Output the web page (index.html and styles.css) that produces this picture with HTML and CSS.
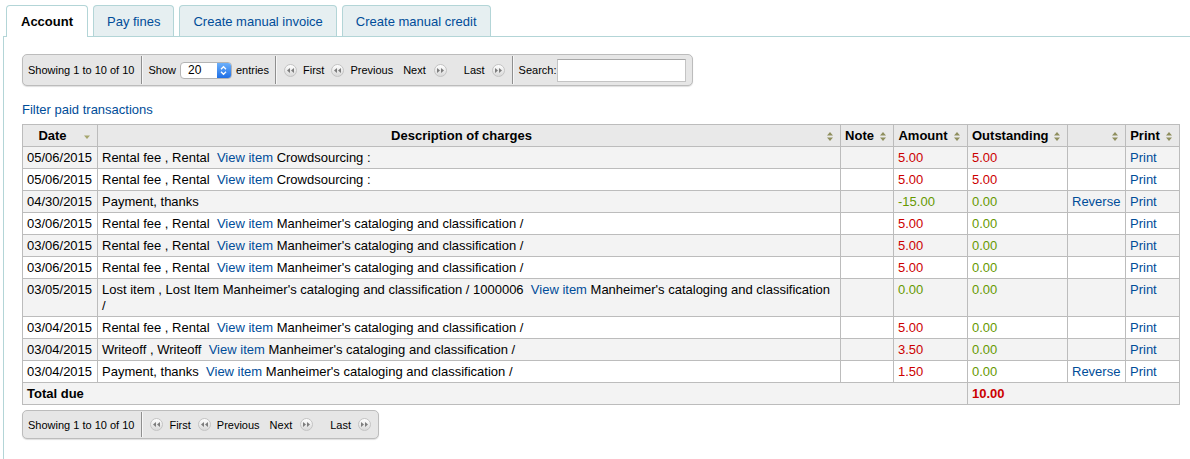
FILE: index.html
```html
<!DOCTYPE html>
<html lang="en">
<head>
<meta charset="utf-8">
<title>Account</title>
<link rel="stylesheet" href="styles.css">
</head>
<body>
<div class="page">
  <ul class="tabs">
    <li class="tab active">Account</li>
    <li class="tab"><a href="#">Pay fines</a></li>
    <li class="tab"><a href="#">Create manual invoice</a></li>
    <li class="tab"><a href="#">Create manual credit</a></li>
  </ul>
  <div class="panel">
    <div class="pager-row">
      <div class="pager top">
        <div class="sec info">Showing 1 to 10 of 10</div>
        <div class="sec length">
          <span>Show</span>
          <span class="select"><span class="val">20</span><span class="stepper"><svg width="7" height="11" viewBox="0 0 7 11"><path d="M1 4.2 L3.5 1.7 L6 4.2 M1 6.8 L3.5 9.3 L6 6.8" fill="none" stroke="#fff" stroke-width="1.3"/></svg></span></span>
          <span>entries</span>
        </div>
        <div class="sec paging">
          <span class="pbtn b-first"><span class="pico"><svg width="7" height="5" viewBox="0 0 7 5"><path d="M3 0 L0 2.5 L3 5Z M7 0 L4 2.5 L7 5Z" fill="#7d7d7d"/></svg></span>First</span>
          <span class="pbtn b-prev"><span class="pico"><svg width="7" height="5" viewBox="0 0 7 5"><path d="M3 0 L0 2.5 L3 5Z M7 0 L4 2.5 L7 5Z" fill="#7d7d7d"/></svg></span>Previous</span>
          <span class="pbtn b-next">Next<span class="pico"><svg width="7" height="5" viewBox="0 0 7 5"><path d="M0 0 L3 2.5 L0 5Z M4 0 L7 2.5 L4 5Z" fill="#7d7d7d"/></svg></span></span>
          <span class="pbtn b-last">Last<span class="pico"><svg width="7" height="5" viewBox="0 0 7 5"><path d="M0 0 L3 2.5 L0 5Z M4 0 L7 2.5 L4 5Z" fill="#7d7d7d"/></svg></span></span>
        </div>
        <div class="sec search">
          <label for="q">Search:</label><input id="q" type="text">
        </div>
      </div>
    </div>

    <p class="filter"><a href="#">Filter paid transactions</a></p>

    <table class="acct">
      <colgroup>
        <col class="c-date"><col class="c-desc"><col class="c-note"><col class="c-amt"><col class="c-out"><col class="c-act"><col class="c-print">
      </colgroup>
      <thead>
        <tr>
          <th>Date<svg class="sort" width="6" height="9" viewBox="0 0 6 9"><path d="M0 3.5 L6 3.5 L3 7Z" fill="#a6a66e"/></svg></th>
          <th>Description of charges<svg class="sort" width="6" height="9" viewBox="0 0 6 9"><path d="M3 0 L6 3.6 L0 3.6Z M0 5.4 L6 5.4 L3 9Z" fill="#8f8f5e"/></svg></th>
          <th>Note<svg class="sort" width="6" height="9" viewBox="0 0 6 9"><path d="M3 0 L6 3.6 L0 3.6Z M0 5.4 L6 5.4 L3 9Z" fill="#8f8f5e"/></svg></th>
          <th>Amount<svg class="sort" width="6" height="9" viewBox="0 0 6 9"><path d="M3 0 L6 3.6 L0 3.6Z M0 5.4 L6 5.4 L3 9Z" fill="#8f8f5e"/></svg></th>
          <th>Outstanding<svg class="sort" width="6" height="9" viewBox="0 0 6 9"><path d="M3 0 L6 3.6 L0 3.6Z M0 5.4 L6 5.4 L3 9Z" fill="#8f8f5e"/></svg></th>
          <th><svg class="sort" width="6" height="9" viewBox="0 0 6 9"><path d="M3 0 L6 3.6 L0 3.6Z M0 5.4 L6 5.4 L3 9Z" fill="#8f8f5e"/></svg></th>
          <th>Print<svg class="sort" width="6" height="9" viewBox="0 0 6 9"><path d="M3 0 L6 3.6 L0 3.6Z M0 5.4 L6 5.4 L3 9Z" fill="#8f8f5e"/></svg></th>
        </tr>
      </thead>
      <tbody>
        <tr>
          <td>05/06/2015</td>
          <td>Rental fee , Rental &nbsp;<a href="#">View item</a> Crowdsourcing :</td>
          <td></td><td class="debit">5.00</td><td class="debit">5.00</td><td></td><td><a href="#">Print</a></td>
        </tr>
        <tr>
          <td>05/06/2015</td>
          <td>Rental fee , Rental &nbsp;<a href="#">View item</a> Crowdsourcing :</td>
          <td></td><td class="debit">5.00</td><td class="debit">5.00</td><td></td><td><a href="#">Print</a></td>
        </tr>
        <tr>
          <td>04/30/2015</td>
          <td>Payment, thanks</td>
          <td></td><td class="credit">-15.00</td><td class="credit">0.00</td><td><a href="#">Reverse</a></td><td><a href="#">Print</a></td>
        </tr>
        <tr>
          <td>03/06/2015</td>
          <td>Rental fee , Rental &nbsp;<a href="#">View item</a> Manheimer's cataloging and classification /</td>
          <td></td><td class="debit">5.00</td><td class="credit">0.00</td><td></td><td><a href="#">Print</a></td>
        </tr>
        <tr>
          <td>03/06/2015</td>
          <td>Rental fee , Rental &nbsp;<a href="#">View item</a> Manheimer's cataloging and classification /</td>
          <td></td><td class="debit">5.00</td><td class="credit">0.00</td><td></td><td><a href="#">Print</a></td>
        </tr>
        <tr>
          <td>03/06/2015</td>
          <td>Rental fee , Rental &nbsp;<a href="#">View item</a> Manheimer's cataloging and classification /</td>
          <td></td><td class="debit">5.00</td><td class="credit">0.00</td><td></td><td><a href="#">Print</a></td>
        </tr>
        <tr>
          <td>03/05/2015</td>
          <td>Lost item , Lost Item Manheimer's cataloging and classification / 1000006 &nbsp;<a href="#">View item</a> Manheimer's cataloging and classification /</td>
          <td></td><td class="credit">0.00</td><td class="credit">0.00</td><td></td><td><a href="#">Print</a></td>
        </tr>
        <tr>
          <td>03/04/2015</td>
          <td>Rental fee , Rental &nbsp;<a href="#">View item</a> Manheimer's cataloging and classification /</td>
          <td></td><td class="debit">5.00</td><td class="credit">0.00</td><td></td><td><a href="#">Print</a></td>
        </tr>
        <tr>
          <td>03/04/2015</td>
          <td>Writeoff , Writeoff &nbsp;<a href="#">View item</a> Manheimer's cataloging and classification /</td>
          <td></td><td class="debit">3.50</td><td class="credit">0.00</td><td></td><td><a href="#">Print</a></td>
        </tr>
        <tr>
          <td>03/04/2015</td>
          <td>Payment, thanks &nbsp;<a href="#">View item</a> Manheimer's cataloging and classification /</td>
          <td></td><td class="debit">1.50</td><td class="credit">0.00</td><td><a href="#">Reverse</a></td><td><a href="#">Print</a></td>
        </tr>
      </tbody>
      <tfoot>
        <tr class="total">
          <td colspan="4">Total due</td>
          <td class="debit" colspan="3">10.00</td>
        </tr>
      </tfoot>
    </table>

    <div class="pager-row">
      <div class="pager bottom">
        <div class="sec info">Showing 1 to 10 of 10</div>
        <div class="sec paging">
          <span class="pbtn b-first"><span class="pico"><svg width="7" height="5" viewBox="0 0 7 5"><path d="M3 0 L0 2.5 L3 5Z M7 0 L4 2.5 L7 5Z" fill="#7d7d7d"/></svg></span>First</span>
          <span class="pbtn b-prev"><span class="pico"><svg width="7" height="5" viewBox="0 0 7 5"><path d="M3 0 L0 2.5 L3 5Z M7 0 L4 2.5 L7 5Z" fill="#7d7d7d"/></svg></span>Previous</span>
          <span class="pbtn b-next">Next<span class="pico"><svg width="7" height="5" viewBox="0 0 7 5"><path d="M0 0 L3 2.5 L0 5Z M4 0 L7 2.5 L4 5Z" fill="#7d7d7d"/></svg></span></span>
          <span class="pbtn b-last">Last<span class="pico"><svg width="7" height="5" viewBox="0 0 7 5"><path d="M0 0 L3 2.5 L0 5Z M4 0 L7 2.5 L4 5Z" fill="#7d7d7d"/></svg></span></span>
        </div>
      </div>
    </div>
  </div>
</div>
</body>
</html>
```

FILE: styles.css
```css
html, body {
  margin: 0;
  padding: 0;
}
body {
  font-family: "Liberation Sans", Arial, Helvetica, sans-serif;
  font-size: 13px;
  color: #000;
  background: #fff;
  overflow: hidden;
}
a {
  color: #004d99;
  text-decoration: none;
}

.page {
  margin-left: 3px;
}

/* tabs */
.tabs {
  display: flex;
  align-items: flex-start;
  gap: 5px;
  list-style: none;
  margin: 0;
  padding: 5px 0 0 3px;
  height: 37px;
  box-sizing: border-box;
  border-bottom: 1px solid #b3d5d7;
}
.tab {
  height: 31px;
  box-sizing: border-box;
  padding: 0 13px;
  line-height: 32px;
  border: 1px solid #b3d5d7;
  border-bottom: none;
  border-radius: 4px 4px 0 0;
  background: #e6eff1;
}
.tab.active {
  height: 32px;
  margin-bottom: -1px;
  padding: 0 14px;
  background: #fff;
  font-weight: bold;
  color: #000;
}

.panel {
  border-left: 1px solid #b3d5d7;
  padding: 17px 0 0 18px;
  min-height: calc(100vh - 37px);
  box-sizing: border-box;
}

/* pager */
.pager {
  display: inline-flex;
  align-items: stretch;
  box-sizing: border-box;
  border: 1px solid #bcbcbc;
  border-radius: 5px;
  background: #e6e6e6;
  font-size: 11px;
  box-shadow: 0 1px 1px rgba(0, 0, 0, 0.13);
}
.pager.top { height: 32px; }
.pager.bottom { height: 29px; margin-top: 5px; }

.sec {
  display: flex;
  align-items: center;
  margin: 1px 0;
  border-right: 1px solid #8f8f8f;
  box-shadow: 1px 0 0 #f7f7f7;
}
.sec:last-child {
  border-right: none;
  box-shadow: none;
}
.info { padding: 0 7px 0 5px; }
.length { padding: 0 6px 0 6px; gap: 4px; }
.paging { padding: 0 7px 0 8px; }
.search { padding: 0 6px 0 6px; }

.select {
  display: flex;
  align-items: stretch;
  width: 52px;
  height: 17px;
  box-sizing: border-box;
  border: 1px solid #b4b4b4;
  border-radius: 4px;
  background: #fff;
  overflow: hidden;
}
.select .val {
  flex: 1;
  padding-left: 7px;
  font-size: 12px;
  line-height: 15px;
}
.select .stepper {
  width: 14px;
  display: flex;
  align-items: center;
  justify-content: center;
  background: linear-gradient(#6cb0fb, #1f6fe6);
}

.pbtn {
  display: flex;
  align-items: center;
  gap: 6px;
}
.b-prev { margin-left: 7px; }
.b-next { margin-left: 10px; gap: 8px; }
.b-last { margin-left: 17px; gap: 7px; }

.pico {
  width: 13px;
  height: 13px;
  box-sizing: border-box;
  border-radius: 50%;
  border: 1px solid #c4c4c4;
  background: linear-gradient(#fefefe, #d9d9d9);
  display: inline-flex;
  align-items: center;
  justify-content: center;
}

.search input {
  width: 129px;
  height: 23px;
  box-sizing: border-box;
  margin: 0;
  border: 1px solid #c4c4c4;
  border-top-color: #a8a8a8;
  background: #fff;
  font: 12px "Liberation Sans", Arial, sans-serif;
  padding: 2px 4px;
}

.filter {
  margin: 16px 0 6px;
  line-height: 16px;
}

/* table */
.acct {
  border-collapse: collapse;
  table-layout: fixed;
  width: 1157px;
}
.c-date { width: 75px; }
.c-desc { width: 743px; }
.c-note { width: 53px; }
.c-amt { width: 74px; }
.c-out { width: 100px; }
.c-act { width: 58px; }
.c-print { width: 54px; }

.acct th,
.acct td {
  border: 1px solid #bcbcbc;
  padding: 3px 4px 2px;
  line-height: 16px;
  vertical-align: top;
  text-align: left;
}
.acct th {
  position: relative;
  background: #e9e9e9;
  font-weight: bold;
  text-align: center;
  vertical-align: middle;
  padding-right: 19px;
  white-space: nowrap;
}
.acct th .sort {
  position: absolute;
  right: 7px;
  top: 50%;
  margin-top: -4px;
}
.acct tbody tr:nth-child(odd) td {
  background: #f3f3f3;
}
.acct td:nth-child(6) {
  white-space: nowrap;
}
.total td {
  background: #f3f3f3;
  font-weight: bold;
}
.debit { color: #cc0000; }
.credit { color: #669900; }
```
